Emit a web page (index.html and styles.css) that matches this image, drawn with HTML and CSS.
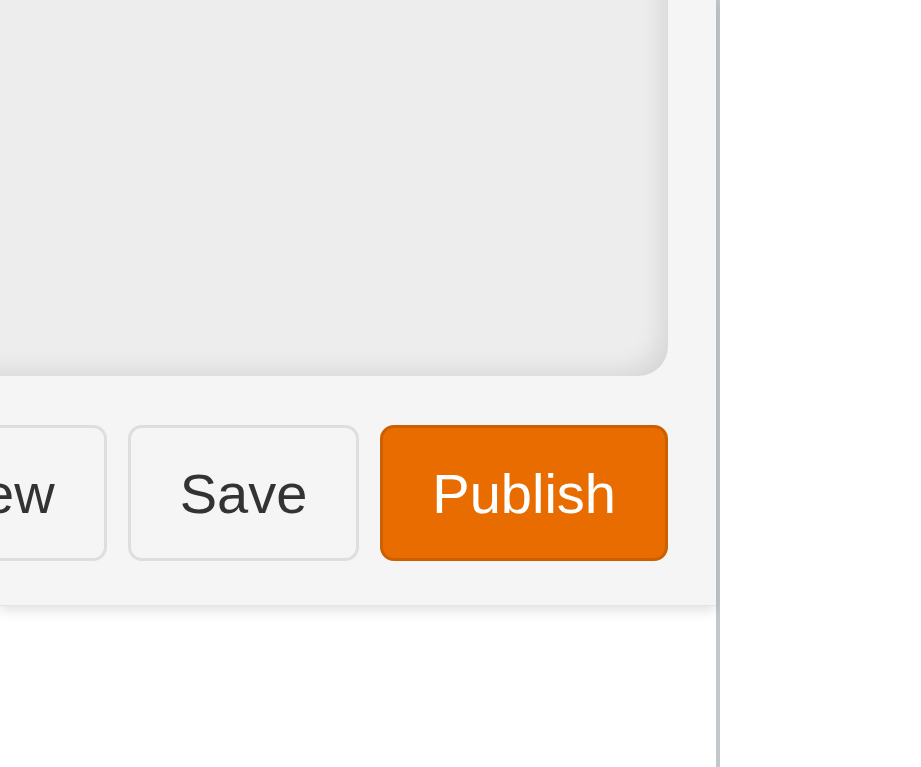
FILE: index.html
```html
<!DOCTYPE html>
<html lang="en">
<head>
<meta charset="utf-8">
<title>Editor</title>
<link rel="stylesheet" href="styles.css">
</head>
<body>
<div class="layout">
  <div class="sidebar">
    <div class="panel">
      <div class="editor"></div>
      <div class="actions">
        <button class="btn">Preview</button>
        <button class="btn">Save</button>
        <button class="btn btn-primary">Publish</button>
      </div>
    </div>
  </div>
  <div class="main"></div>
</div>
</body>
</html>
```
FILE: styles.css
```css
html, body {
  margin: 0;
  padding: 0;
  background: #ffffff;
  font-family: "Liberation Sans", Arial, sans-serif;
}
.layout {
  display: flex;
  height: 767px;
  overflow: hidden;
}
.sidebar {
  width: 716px;
  flex-shrink: 0;
  border-right: 4px solid #c4c7ca;
}
.main {
  flex: 1;
  background: #ffffff;
}
.panel {
  background: #f5f5f5;
  padding: 0 48px 44px 0;
  box-shadow: 0 4px 12px rgba(0, 0, 0, 0.13);
  border-bottom: 1px solid #e4e4e4;
  overflow: hidden;
}
.editor {
  height: 376px;
  background: #ededed;
  border-bottom-right-radius: 30px;
  box-shadow: inset -16px -14px 24px -10px rgba(0, 0, 0, 0.1);
}
.actions {
  margin-top: 49px;
  display: flex;
  justify-content: flex-end;
  gap: 21px;
}
.btn {
  flex-shrink: 0;
  height: 136px;
  padding: 0 49px;
  font-family: "Liberation Sans", Arial, sans-serif;
  font-size: 56px;
  color: #333333;
  background: #f5f5f5;
  border: 3px solid #dedede;
  border-radius: 14px;
  white-space: nowrap;
}
.btn-primary {
  background: #e86c00;
  border-color: #cc5f00;
  color: #ffffff;
}
```
